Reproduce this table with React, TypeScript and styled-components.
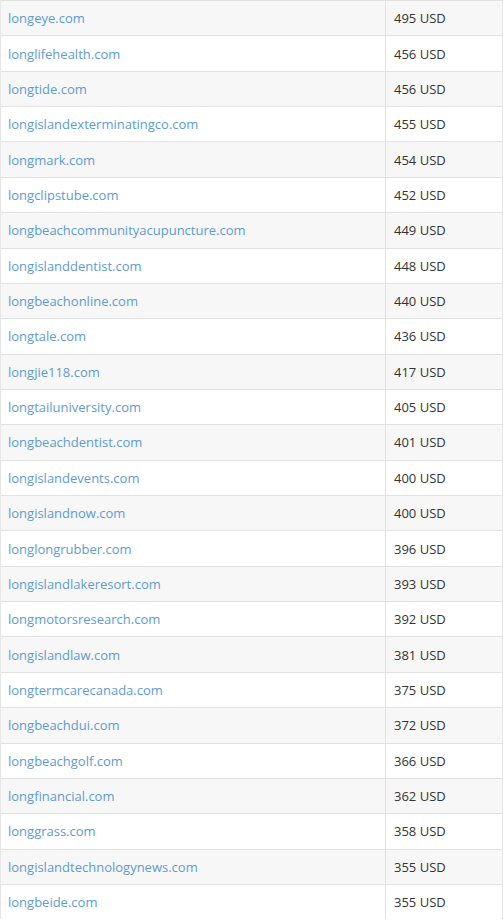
import React from "react";
import styled, { createGlobalStyle } from "styled-components";

const Global = createGlobalStyle`
  html, body { margin: 0; padding: 0; background: #fff; }
  body { font-family: "Open Sans", "Liberation Sans", sans-serif; font-size: 13px; color: #333; }
`;

const rows: [string, number][] = [
  ["longeye.com", 495],
  ["longlifehealth.com", 456],
  ["longtide.com", 456],
  ["longislandexterminatingco.com", 455],
  ["longmark.com", 454],
  ["longclipstube.com", 452],
  ["longbeachcommunityacupuncture.com", 449],
  ["longislanddentist.com", 448],
  ["longbeachonline.com", 440],
  ["longtale.com", 436],
  ["longjie118.com", 417],
  ["longtailuniversity.com", 405],
  ["longbeachdentist.com", 401],
  ["longislandevents.com", 400],
  ["longislandnow.com", 400],
  ["longlongrubber.com", 396],
  ["longislandlakeresort.com", 393],
  ["longmotorsresearch.com", 392],
  ["longislandlaw.com", 381],
  ["longtermcarecanada.com", 375],
  ["longbeachdui.com", 372],
  ["longbeachgolf.com", 366],
  ["longfinancial.com", 362],
  ["longgrass.com", 358],
  ["longislandtechnologynews.com", 355],
  ["longbeide.com", 355],
];

const Wrap = styled.div`
  width: 501px;
  border-left: 1px solid #e6e6e6;
  border-right: 1px solid #e6e6e6;
`;

const Table = styled.table`
  width: 100%;
  border-collapse: collapse;
  table-layout: fixed;
`;

const Row = styled.tr<{ $striped: boolean }>`
  background: ${(p) => (p.$striped ? "#f7f7f7" : "#fff")};
`;

const Cell = styled.td<{ $w?: number }>`
  height: 34.36px;
  padding: 0 8px;
  border-top: 1px solid #e2e2e2;
  border-left: 1px solid #e2e2e2;
  vertical-align: middle;
  line-height: 18px;
  white-space: nowrap;
  &:first-child { border-left: none; padding-left: 7px; }
  ${(p) => (p.$w ? `width: ${p.$w}px;` : "")}
`;

const Link = styled.a`
  color: #5e9bd3;
  text-decoration: none;
`;

export default function App() {
  return (
    <>
      <Global />
      <Wrap>
        <Table>
          <tbody>
            {rows.map(([d, v], i) => (
              <Row key={d} $striped={i % 2 === 0}>
                <Cell $w={369}>
                  <Link href="#">{d}</Link>
                </Cell>
                <Cell>{v} USD</Cell>
              </Row>
            ))}
          </tbody>
        </Table>
      </Wrap>
    </>
  );
}
